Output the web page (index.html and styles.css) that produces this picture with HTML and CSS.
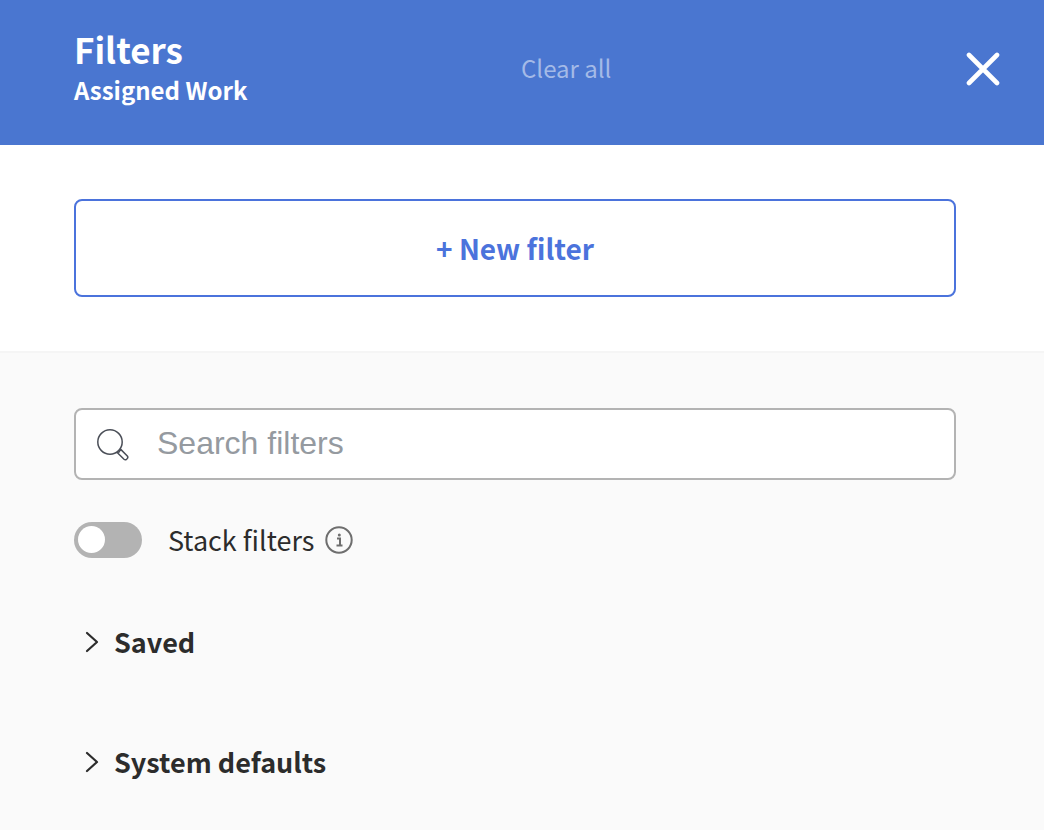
FILE: index.html
```
<!DOCTYPE html>
<html lang="en">
<head>
<meta charset="utf-8">
<meta name="viewport" content="width=device-width, initial-scale=1">
<title>Filters</title>
<link rel="stylesheet" href="styles.css">
</head>
<body>
<header class="header">
  <div class="heading">
    <h1 class="title">Filters</h1>
    <p class="subtitle">Assigned Work</p>
  </div>
  <div class="header-actions">
    <button class="clear" type="button" disabled>Clear all</button>
    <button class="close" type="button" aria-label="Close">
      <svg width="34" height="34" viewBox="0 0 34 34" fill="none" stroke="currentColor" stroke-width="4.6" stroke-linecap="round" aria-hidden="true"><path d="M3 3 31 31M31 3 3 31"/></svg>
    </button>
  </div>
</header>
<main class="main">
  <section class="create">
    <button class="new-filter" type="button">+ New filter</button>
  </section>
  <section class="browse">
    <div class="search">
      <svg class="search-icon" width="32" height="32" viewBox="0 0 32 32" fill="none" stroke="currentColor" stroke-width="1.5" aria-hidden="true"><circle cx="13" cy="13" r="12.2"/><path d="M19.6 23.8 22.2 22.9 23.5 20.1 30.3 26.9Q31.4 28.2 30.2 29.6L29.6 30.2Q28.3 31.4 27 30.3L20.2 23.5"/></svg>
      <input class="search-input" type="text" placeholder="Search filters" aria-label="Search filters">
    </div>
    <div class="stack">
      <input class="toggle" id="stack" type="checkbox" role="switch">
      <label class="stack-label" for="stack">Stack filters</label>
      <button class="info" type="button" aria-label="About stacking filters">
        <svg width="28" height="28" viewBox="0 0 28 28" fill="none" stroke="currentColor" stroke-width="2" aria-hidden="true"><circle cx="14" cy="14" r="12.7"/><path d="M12 12.5h3v7M11.5 19.5h6"/><circle cx="14.3" cy="8.9" r="1.5" fill="currentColor" stroke="none"/></svg>
      </button>
    </div>
    <button class="group" type="button" aria-expanded="false">
      <svg width="14" height="22" viewBox="0 0 14 22" fill="none" stroke="currentColor" stroke-width="2.2" stroke-linecap="round" stroke-linejoin="round" aria-hidden="true"><path d="M2 2 12 11 2 20"/></svg>
      Saved
    </button>
    <button class="group" type="button" aria-expanded="false">
      <svg width="14" height="22" viewBox="0 0 14 22" fill="none" stroke="currentColor" stroke-width="2.2" stroke-linecap="round" stroke-linejoin="round" aria-hidden="true"><path d="M2 2 12 11 2 20"/></svg>
      System defaults
    </button>
  </section>
</main>
</body>
</html>
```
FILE: styles.css
```
* { box-sizing: border-box; }
body {
  margin: 0;
  min-height: 100vh;
  display: flex;
  flex-direction: column;
  font-family: "Noto Sans CJK SC", "Noto Sans", sans-serif;
  color: #2c2c2c;
  background: #fff;
}
button {
  font: inherit;
  color: inherit;
  padding: 0;
  border: 0;
  background: none;
}
svg { display: block; flex: none; }
.header {
  display: grid;
  grid-template-columns: 14fr 15fr;
  padding: 27px 44px 36px 74px;
  background: #4a76d0;
  color: #fff;
}
.title, .subtitle { margin: 0; font-weight: 700; }
.title { font-size: 35px; line-height: 44px; }
.subtitle { font-size: 24px; line-height: 38px; }
.header-actions {
  display: flex;
  justify-content: space-between;
  align-items: center;
}
.clear { font-size: 24px; line-height: 36px; color: #a4bae7; }
.close { margin-top: 2px; }
.main { flex: 1; display: flex; flex-direction: column; }
.create {
  padding: 54px 88px 54px 74px;
  border-bottom: 2px solid #f5f5f5;
}
.new-filter {
  width: 100%;
  height: 98px;
  border: 2px solid #4b73dc;
  border-radius: 8px;
  font-size: 28px;
  font-weight: 700;
  color: #4b73dc;
}
.browse {
  flex: 1;
  display: flex;
  flex-direction: column;
  align-items: flex-start;
  padding: 55px 88px 42px 74px;
  background: #fafafa;
}
.search {
  width: 100%;
  height: 72px;
  display: flex;
  align-items: center;
  gap: 28px;
  padding: 1px 21px 0;
  border: 2px solid #b3b3b3;
  border-radius: 8px;
  background: #fff;
}
.search-icon { color: #4b4f58; }
.search-input {
  flex: 1;
  min-width: 0;
  height: 66px;
  padding: 0 0 2px;
  border: 0;
  outline: 0;
  background: none;
  font: 32px "Liberation Sans", sans-serif;
  color: #2c2c2c;
}
.search-input::placeholder { color: #959aa0; opacity: 1; }
.stack { display: flex; align-items: center; margin-top: 38px; }
.toggle {
  appearance: none;
  width: 68px;
  height: 36px;
  margin: 0;
  padding: 4px;
  border-radius: 18px;
  background: #b3b3b3;
}
.toggle::before {
  content: "";
  display: block;
  width: 27px;
  height: 27px;
  border-radius: 50%;
  background: #fff;
}
.toggle:checked { background: #4b73dc; }
.toggle:checked::before { margin-left: auto; }
.stack-label { margin: 0 11px 0 26px; font-size: 27px; line-height: 44px; }
.info { color: #6e6e6e; }
.group {
  display: flex;
  align-items: center;
  gap: 15px;
  margin: 58px 0 0 11px;
  font-size: 27px;
  font-weight: 700;
  line-height: 44px;
}
.group + .group { margin-top: 76px; }
```
